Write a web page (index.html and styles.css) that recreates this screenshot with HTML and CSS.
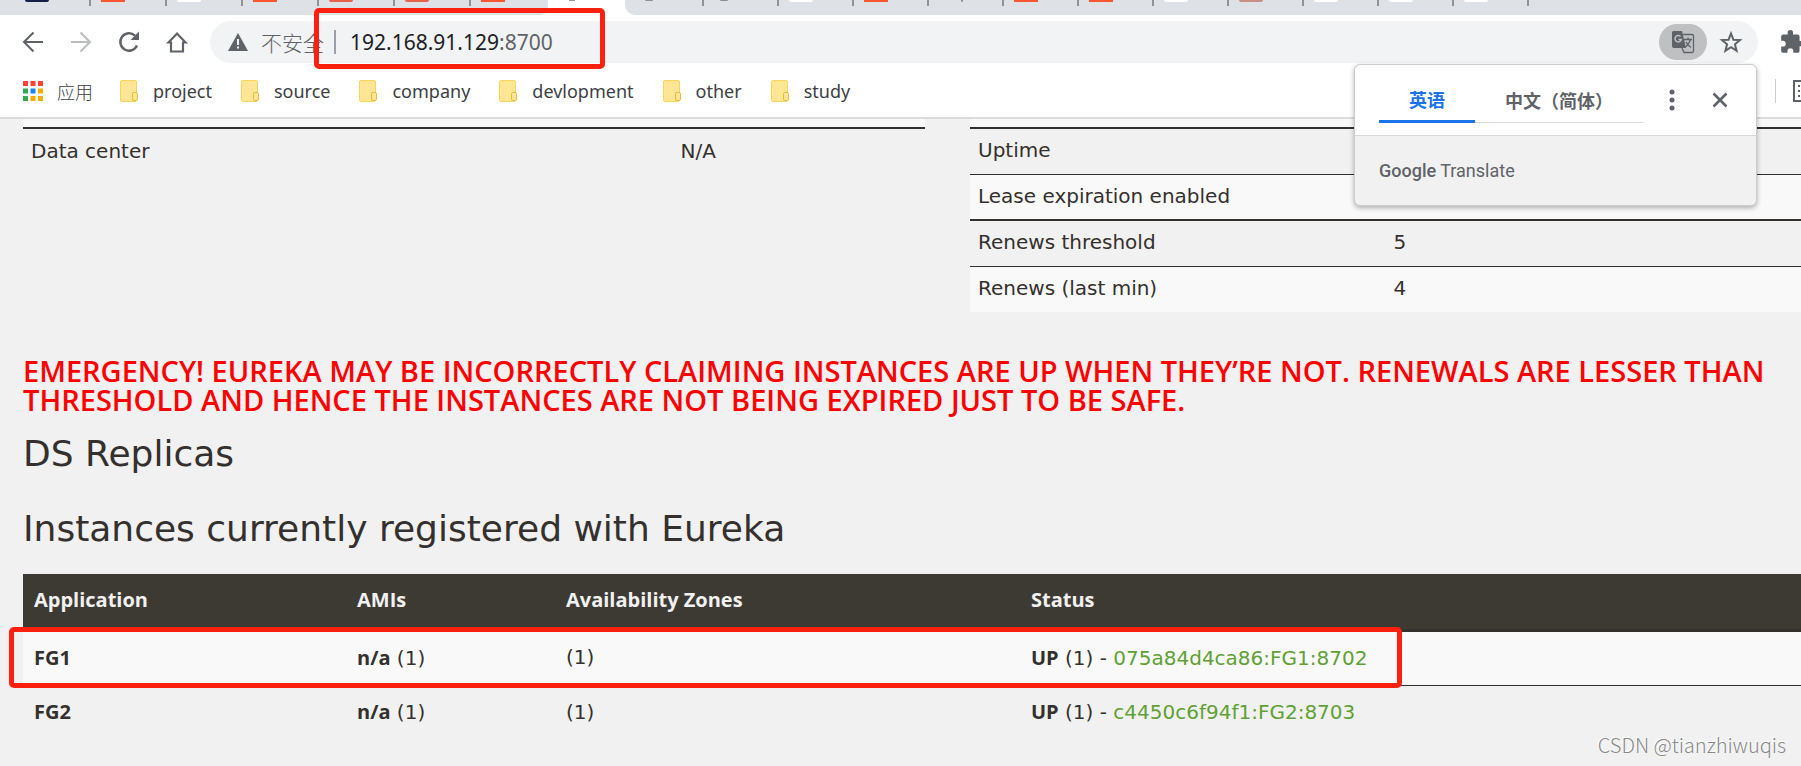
FILE: index.html
```html
<!DOCTYPE html>
<html lang="zh-CN">

<head>
    <meta charset="UTF-8">
    <meta name="viewport" content="width=device-width, initial-scale=1.0">
    <title>Eureka</title>
    <link rel="stylesheet" href="styles.css">
</head>

<body>
    <!-- 浏览器顶部 -->
    <header class="browser">
        <div class="tabs">
            <ul class="tab-group left">
                <li class="tab navy"></li>
                <li class="tab orange"></li>
                <li class="tab white"></li>
                <li class="tab orange"></li>
                <li class="tab red"></li>
                <li class="tab red"></li>
                <li class="tab orange"></li>
            </ul>
            <div class="tab-active"></div>
            <ul class="tab-group right">
                <li class="tab gray"></li>
                <li class="tab gray"></li>
                <li class="tab white"></li>
                <li class="tab orange"></li>
                <li class="tab line"></li>
                <li class="tab orange"></li>
                <li class="tab orange"></li>
                <li class="tab white"></li>
                <li class="tab brown"></li>
                <li class="tab white"></li>
                <li class="tab white"></li>
                <li class="tab white"></li>
                <li class="tab"></li>
            </ul>
        </div>

        <div class="toolbar">
            <button class="nav-btn" aria-label="后退">
                <svg viewBox="0 0 24 24" width="24" height="24" fill="none" stroke="#5f6368" stroke-width="2"><path d="M22 12H4M12.500 2.500L3 12l9.500 9.500"/></svg>
            </button>
            <button class="nav-btn" aria-label="前进">
                <svg viewBox="0 0 24 24" width="24" height="24" fill="none" stroke="#babcbe" stroke-width="2"><path d="M2 12h18M11.500 2.500L21 12l-9.500 9.500"/></svg>
            </button>
            <button class="nav-btn" aria-label="刷新">
                <svg viewBox="0 0 24 24" width="24" height="24"><path d="M20 15.500A8.700 8.700 0 1 1 18 5.600" fill="none" stroke="#5f6368" stroke-width="2.400"/><path d="M22 1.500V10h-8.500z" fill="#5f6368"/></svg>
            </button>
            <button class="nav-btn" aria-label="主页">
                <svg viewBox="0 0 24 24" width="24" height="24" fill="none" stroke="#5f6368" stroke-width="2.200"><path d="M3.500 12.500L12 3.500l8.500 9H18V21.500H6V12.500z"/></svg>
            </button>
            <div class="address">
                <svg class="warn" viewBox="0 0 20 18" width="20" height="18"><path d="M10 0l10 18H0z" fill="#5f6368"/><path d="M9 6h2v6H9zM9 13.500h2v2H9z" fill="#f1f3f4"/></svg>
                <span class="unsafe">不安全</span>
                <span class="split"></span>
                <span class="url">192.168.91.129<span class="port">:8700</span></span>
                <button class="trans-btn" aria-label="翻译此页">
                    <svg viewBox="0 0 24 24" width="24" height="24"><path d="M2 1h9l4 17H3a2 2 0 0 1-2-2V2z" fill="#5f6368"/><path d="M12 4.500h9a1.500 1.500 0 0 1 1.500 1.500v15a1.500 1.500 0 0 1-1.500 1.500h-8l-2-4.500M13 9.500h8M17 7.500v2M19.500 9.500c-1 4-3 6-5 7.500M15 12c1 2.500 3 4 5 5.500" fill="none" stroke="#5f6368" stroke-width="1.300"/><path d="M9.500 6.500a3.200 3.200 0 1 0 .8 3H7.500" fill="none" stroke="#bdc1c6" stroke-width="1.500"/></svg>
                </button>
                <button class="star-btn" aria-label="收藏">
                    <svg viewBox="0 0 24 24" width="24" height="24" fill="none" stroke="#5f6368" stroke-width="2"><path d="M12 3.500l2.400 6.200 6.600.4-5.100 4.200 1.700 6.500-5.600-3.600-5.600 3.600 1.700-6.500L3 10.100l6.600-.4z"/></svg>
                </button>
            </div>
            <button class="ext-btn" aria-label="扩展程序">
                <svg viewBox="0 0 24 24" width="26" height="26"><path d="M20.500 11H19V7a2 2 0 0 0-2-2h-4V3.500a2.500 2.500 0 0 0-5 0V5H4a2 2 0 0 0-2 2v3.800h1.500a2.700 2.700 0 0 1 0 5.400H2V20a2 2 0 0 0 2 2h3.800v-1.500a2.700 2.700 0 0 1 5.400 0V22H17a2 2 0 0 0 2-2v-4h1.500a2.500 2.500 0 0 0 0-5z" fill="#5f6368"/></svg>
            </button>
        </div>

        <nav class="bookmarks">
            <a class="apps" href="#">
                <svg viewBox="0 0 20 20" width="20" height="20"><path d="M0 0h5v5H0zM7.500 0h5v5h-5zM15 0h5v5h-5z" fill="#ff4136"/><path d="M0 7.500h5v5H0zM0 15h5v5H0z" fill="#34a853"/><path d="M7.500 7.500h5v5h-5z" fill="#1a84ff"/><path d="M15 7.500h5v5h-5zM15 15h5v5h-5zM7.500 15h5v5h-5z" fill="#f9ab00"/></svg>
                应用
            </a>
            <a href="#"><i class="folder"></i>project</a>
            <a href="#"><i class="folder"></i>source</a>
            <a href="#"><i class="folder"></i>company</a>
            <a href="#"><i class="folder"></i>devlopment</a>
            <a href="#"><i class="folder"></i>other</a>
            <a href="#"><i class="folder"></i>study</a>
            <button class="list-btn" aria-label="阅读清单">
                <svg viewBox="0 0 22 22" width="22" height="22" fill="none" stroke="#5f6368" stroke-width="2"><path d="M1 1h20v20H1zM5 6h2M5 11h2M5 16h2M10 6h8M10 11h8M10 16h8"/></svg>
            </button>
        </nav>

        <!-- 翻译弹窗 -->
        <div class="translate">
            <div class="translate-top">
                <div class="langs">
                    <button class="lang current">英语</button>
                    <button class="lang">中文（简体）</button>
                </div>
                <button class="more" aria-label="更多">
                    <svg viewBox="0 0 6 22" width="6" height="22" fill="#5f6368"><circle cx="3" cy="3" r="2.500"/><circle cx="3" cy="11" r="2.500"/><circle cx="3" cy="19" r="2.500"/></svg>
                </button>
                <button class="close" aria-label="关闭">
                    <svg viewBox="0 0 16 16" width="16" height="16" fill="none" stroke="#5f6368" stroke-width="2.600"><path d="M1.500 1.500l13 13M14.500 1.500l-13 13"/></svg>
                </button>
            </div>
            <p class="translate-logo"><b>Google</b> Translate</p>
        </div>
    </header>

    <main class="page">
        <div class="status">
            <table class="info">
                <tr class="peek"><td></td><td></td></tr>
                <tr class="thick"><td>Data center</td><td>N/A</td></tr>
            </table>
            <table class="info wide">
                <tr class="peek"><td></td><td></td></tr>
                <tr class="thick"><td>Uptime</td><td></td></tr>
                <tr class="light"><td>Lease expiration enabled</td><td></td></tr>
                <tr class="thick"><td>Renews threshold</td><td>5</td></tr>
                <tr class="light"><td>Renews (last min)</td><td>4</td></tr>
            </table>
        </div>

        <h4 class="emergency">EMERGENCY! EUREKA MAY BE INCORRECTLY CLAIMING INSTANCES ARE UP WHEN THEY’RE NOT. RENEWALS ARE LESSER THAN<br>THRESHOLD AND HENCE THE INSTANCES ARE NOT BEING EXPIRED JUST TO BE SAFE.</h4>

        <h1>DS Replicas</h1>
        <h1>Instances currently registered with Eureka</h1>

        <div class="instances-box">
            <table class="instances">
                <thead>
                    <tr><th class="app">Application</th><th class="amis">AMIs</th><th class="zones">Availability Zones</th><th>Status</th></tr>
                </thead>
                <tbody>
                    <tr class="light"><td><b>FG1</b></td><td><b>n/a</b> (1)</td><td>(1)</td><td><b>UP</b> (1) - <a href="#">075a84d4ca86:FG1:8702</a></td></tr>
                    <tr><td><b>FG2</b></td><td><b>n/a</b> (1)</td><td>(1)</td><td><b>UP</b> (1) - <a href="#">c4450c6f94f1:FG2:8703</a></td></tr>
                </tbody>
            </table>
            <div class="mark mark-row"></div>
        </div>
    </main>

    <div class="mark mark-url"></div>
    <div class="watermark">CSDN @tianzhiwuqis</div>
</body>

</html>
```
FILE: styles.css
```css
* {
    box-sizing: border-box;
    padding: 0;
    margin: 0;
    list-style: none;
}

body {
    position: relative;
    min-height: 100vh;
    overflow: hidden;
    background: #f1f1f1;
    color: #34302d;
    font-family: "DejaVu Sans", "Noto Sans CJK SC", sans-serif;
    font-size: 20px;
}

button {
    border: 0;
    background: none;
    font: inherit;
    color: inherit;
    cursor: pointer;
}

a {
    color: inherit;
    text-decoration: none;
}

svg {
    display: block;
    flex: none;
}

.browser {
    position: relative;
    background: #fff;
    border-bottom: 2px solid #dcdcdc;
    font-family: "Noto Sans", "Noto Sans CJK SC", sans-serif;
}

/* 标签栏 */
.tabs {
    display: flex;
    height: 15px;
    overflow: hidden;
}

.tab-group {
    display: flex;
    background: #dee1e6;
}

.tab-group.left {
    width: 548px;
    padding-left: 15px;
    border-bottom-right-radius: 8px;
}

.tab-group.right {
    flex: 1;
    padding-left: 4px;
    border-bottom-left-radius: 10px;
}

.tab-active {
    width: 77px;
}

.tab-active::before {
    content: "";
    display: block;
    width: 6px;
    height: 1px;
    margin-left: 21px;
    background: #9a9a9a;
}

.tab {
    flex: none;
    width: 76px;
    height: 6px;
    border-right: 2px solid #909396;
}

.right .tab {
    width: 75px;
}

.tab:last-child {
    border: 0;
}

.tab::before {
    content: "";
    display: block;
    width: 24px;
    height: 2px;
    margin-left: 10px;
    border-radius: 0 0 3px 3px;
}

.navy::before {
    background: #15204a;
}

.orange::before {
    background: #fc5531;
    border-radius: 0;
}

.white::before {
    background: #fff;
}

.red::before {
    background: #e8604c;
}

.gray::before {
    width: 8px;
    height: 1px;
    margin-left: 16px;
    background: #8d9094;
}

.line::before {
    width: 2px;
    margin-left: 32px;
    background: #909396;
}

.brown::before {
    background: #c98f80;
}

/* 地址栏 */
.toolbar {
    display: flex;
    align-items: center;
    height: 54px;
    padding-left: 9px;
}

.nav-btn {
    display: flex;
    justify-content: center;
    width: 48px;
}

.address {
    display: flex;
    flex: 1;
    align-items: center;
    height: 42px;
    margin-left: 9px;
    padding: 0 15px 0 18px;
    border-radius: 21px;
    background: #f1f3f4;
    color: #5f6368;
    font-size: 21px;
}

.unsafe {
    margin-left: 13px;
    font-weight: 300;
}

.split {
    width: 2px;
    height: 24px;
    margin: 0 14px 0 10px;
    background: #9aa0a6;
}

.url {
    flex: 1;
    color: #202124;
}

.port {
    color: #5f6368;
}

.trans-btn {
    display: flex;
    align-items: center;
    justify-content: center;
    width: 48px;
    height: 36px;
    margin-right: 12px;
    border-radius: 18px;
    background: #bfc0c2;
}

.ext-btn {
    width: 22px;
    margin-left: 21px;
    overflow: hidden;
}

/* 书签栏 */
.bookmarks {
    display: flex;
    align-items: center;
    height: 48px;
    padding: 0 0 5px 23px;
    color: #3c4043;
    font-size: 18px;
}

.bookmarks a {
    display: flex;
    align-items: center;
    margin-right: 29px;
}

.bookmarks .apps {
    gap: 14px;
    margin-right: 27px;
    font-weight: 300;
}

.folder {
    display: flex;
    align-items: flex-end;
    justify-content: flex-end;
    width: 17px;
    height: 22px;
    margin-right: 16px;
    border: 1px solid #f8d45c;
    border-radius: 2px;
    background: #ffe694;
}

.folder::after {
    content: "";
    width: 4px;
    height: 7px;
    margin-right: -2px;
    border: 1px solid #e9bd3c;
    border-radius: 2px;
    background: #ffe694;
}

.list-btn {
    width: 26px;
    height: 24px;
    margin-left: auto;
    padding-left: 17px;
    border-left: 1px solid #ccc;
    overflow: hidden;
}

/* 翻译弹窗 */
.translate {
    position: absolute;
    top: 64px;
    right: 44px;
    z-index: 2;
    width: 403px;
    border: 1px solid #ccc;
    border-radius: 6px;
    background: #f1f1f1;
    box-shadow: 0 2px 5px rgba(0, 0, 0, 0.3);
    color: #5f6368;
}

.translate-top {
    display: flex;
    align-items: center;
    height: 71px;
    padding: 0 28px 0 24px;
    border-bottom: 1px solid #d8d8d8;
    border-radius: 6px 6px 0 0;
    background: #fff;
}

.langs {
    display: flex;
    align-self: flex-end;
    width: 264px;
    height: 46px;
    margin-bottom: 12px;
    border-bottom: 1px solid #d8d8d8;
}

.lang {
    height: 46px;
    padding: 0 30px;
    font-size: 18px;
    font-weight: bold;
}

.lang.current {
    border-bottom: 3px solid #1a73e8;
    color: #1a73e8;
}

.more {
    margin-left: 26px;
}

.close {
    margin-left: auto;
}

.translate-logo {
    padding: 23px 24px 22px;
    font-family: Roboto, sans-serif;
    font-size: 18px;
    line-height: 24px;
}

.translate-logo b {
    font-weight: 500;
}

/* Eureka 页面 */
.page {
    padding-left: 23px;
}

.status {
    display: flex;
    align-items: flex-start;
    gap: 45px;
    height: 237px;
}

table {
    border-collapse: collapse;
    table-layout: fixed;
}

.info {
    width: 902px;
}

.info.wide {
    width: 831px;
}

.info td {
    height: 46px;
    padding: 0 8px 2px;
    border-top: 1px solid #34302d;
}

.info td:first-child {
    width: 72%;
}

.info.wide td:first-child {
    width: 50%;
}

.info .peek td {
    height: 9px;
    border: 0;
    background: #f9f9f9;
}

.info .thick td {
    border-top-width: 2px;
}

.light {
    background: #f9f9f9;
}

.emergency {
    color: #f00;
    font-family: "Open Sans", sans-serif;
    font-size: 29px;
    font-weight: 600;
    line-height: 29px;
    white-space: nowrap;
}

h1 {
    margin: 20px 0 25px;
    font-size: 36px;
    font-weight: 500;
    line-height: 40px;
}

h1 + h1 {
    margin-top: 35px;
}

.instances-box {
    position: relative;
}

.instances {
    width: 100%;
}

.instances th {
    height: 56px;
    padding: 0 11px 3px;
    border-bottom: 3px solid #34302d;
    background: #3d3a34;
    color: #f1f1f1;
    text-align: left;
}

.instances th,
.instances b {
    font-family: "Open Sans", sans-serif;
    font-weight: bold;
}

.instances .app {
    width: 323px;
}

.instances .amis {
    width: 209px;
}

.instances .zones {
    width: 465px;
}

.instances td {
    height: 55px;
    padding: 0 11px 2px;
}

.instances tbody tr + tr td {
    border-top: 1px solid #34302d;
}

.instances a {
    color: #5fa134;
}

/* 红色标记框 */
.mark {
    position: absolute;
    border: 5px solid #ff2010;
    border-radius: 5px;
}

.mark-url {
    top: 8px;
    left: 314px;
    z-index: 3;
    width: 291px;
    height: 61px;
}

.mark-row {
    top: 53px;
    left: -14px;
    width: 1393px;
    height: 61px;
}

.watermark {
    position: absolute;
    right: 15px;
    bottom: 7px;
    color: #888;
    font-family: "Noto Sans CJK SC", sans-serif;
    font-size: 20px;
    font-weight: 300;
    text-shadow: -1px -1px 0 #fff;
}
```
